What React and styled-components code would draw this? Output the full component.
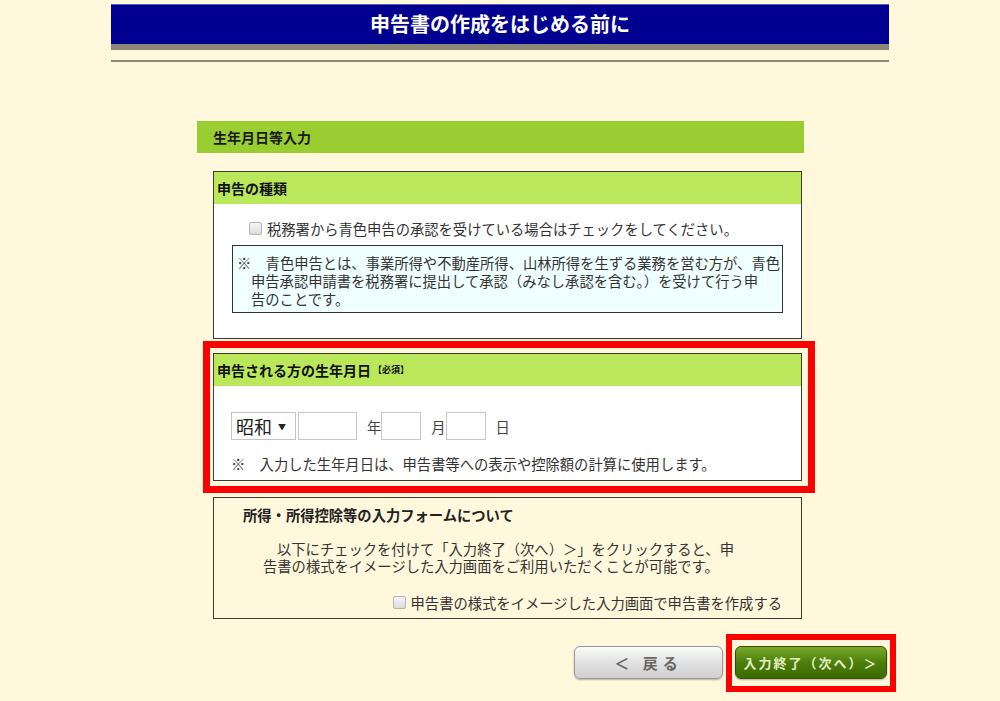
import React from "react";
import styled, { createGlobalStyle } from "styled-components";

const GlobalStyle = createGlobalStyle`
  body {
    margin: 0;
    background: #fff8dc;
    font-family: "Noto Sans CJK JP", "Noto Sans", sans-serif;
    color: #333;
  }
`;

const Page = styled.div`
  width: 778px;
  margin: 0 auto;
  padding-top: 4px;
  padding-bottom: 20px;
`;

const TitleBar = styled.h1`
  margin: 0;
  height: 39px;
  line-height: 37px;
  background: #000090;
  border-top: 1px solid #5a5ab0;
  border-bottom: 6px solid #8c8878;
  color: #fff;
  font-size: 20px;
  font-weight: bold;
  text-align: center;
`;

const Rule = styled.hr`
  margin: 10px 0 0;
  height: 2px;
  border: none;
  background: #8c8878;
`;

const Content = styled.div`
  padding-left: 86px;
  margin-top: 59px;
`;

const SectionBar = styled.h2`
  margin: 0;
  width: 607px;
  height: 32px;
  line-height: 32px;
  box-sizing: border-box;
  padding-left: 16px;
  background: #9acd32;
  color: #1a1a1a;
  font-size: 14px;
  font-weight: bold;
`;

const BoxStack = styled.div`
  margin: 18px 0 0 16px;
  width: 589px;
  display: flex;
  flex-direction: column;
`;

const Box = styled.section`
  position: relative;
  box-sizing: border-box;
  border: 1px solid #3c3c30;
  background: ${(p) => (p.$plain ? "#fff8dc" : "#fff")};
  margin-top: ${(p) => p.$gap || 0}px;
  padding-bottom: ${(p) => p.$pb || 0}px;

  ${(p) =>
    p.$marked &&
    `
    &::after {
      content: "";
      position: absolute;
      top: -13px;
      left: -11px;
      right: -14px;
      bottom: -13px;
      border: 7px solid #f00;
      pointer-events: none;
    }
  `}
`;

const BoxHeader = styled.h3`
  margin: 0;
  height: 32px;
  line-height: 32px;
  padding-left: 3px;
  background: #bbe85a;
  color: #111;
  font-size: 14px;
  font-weight: bold;
  display: flex;
  align-items: center;
`;

const Required = styled.span`
  font-size: 9px;
  font-weight: bold;
  margin-left: 2px;
`;

const CheckRow = styled.label`
  display: flex;
  align-items: center;
  height: 20px;
  font-size: 14.3px;
  color: #333;
  justify-content: ${(p) => (p.$right ? "flex-end" : "flex-start")};
  padding: ${(p) => (p.$right ? "0 19px 0 0" : "0 0 0 35px")};
  margin-top: ${(p) => p.$mt || 0}px;
`;

const Check = styled.input.attrs({ type: "checkbox" })`
  appearance: none;
  width: 13px;
  height: 13px;
  margin: 0 5px 0 0;
  border: 1px solid #b4b4b4;
  border-radius: 2px;
  background: linear-gradient(#f6f6f6, #dcdcdc);
`;

const NoteBox = styled.p`
  margin: 7px 18px 0;
  padding: 8px 2px 4px 18px;
  border: 1px solid #333;
  background: #f0ffff;
  font-size: 14.3px;
  line-height: 18px;
  text-indent: -14px;
  color: #333;
`;

const DateRow = styled.div`
  display: flex;
  align-items: center;
  margin: 26px 0 0 17px;
  height: 28px;
`;

const EraSelect = styled.div`
  box-sizing: border-box;
  width: 65px;
  height: 28px;
  border: 1px solid #c4c4c4;
  background: #fff;
  display: flex;
  align-items: center;
  padding-left: 4px;
  font-size: 18px;
  color: #222;

  span {
    font-size: 8px;
    margin-left: 6px;
  }
`;

const DateInput = styled.input`
  box-sizing: border-box;
  width: ${(p) => p.$w}px;
  height: 28px;
  margin-left: 2px;
  border: 1px solid #c8c8c8;
  background: #fff;
`;

const Unit = styled.span`
  font-size: 14.3px;
  color: #444;
  margin: 0 -2px 0 10px;
`;

const Note = styled.p`
  margin: 15px 0 0 17px;
  font-size: 14.3px;
  line-height: 18px;
  color: #333;
`;

const FormTitle = styled.h3`
  margin: 7px 0 0 29px;
  font-size: 14.3px;
  line-height: 20px;
  font-weight: bold;
  color: #222;
`;

const FormText = styled.p`
  margin: 15px 0 0 49px;
  font-size: 14.3px;
  line-height: 17px;
  text-indent: 14px;
  color: #333;
`;

const ButtonRow = styled.div`
  display: flex;
  justify-content: flex-end;
  gap: 12px;
  margin-top: 27px;
  padding-right: 2px;
`;

const NavButton = styled.button`
  position: relative;
  width: ${(p) => (p.$primary ? 152 : 149)}px;
  height: 33px;
  border-radius: 6px;
  font-family: inherit;
  font-weight: bold;
  cursor: pointer;
  font-size: ${(p) => (p.$primary ? 13 : 15)}px;
  letter-spacing: ${(p) => (p.$primary ? 2 : 5)}px;
  color: ${(p) => (p.$primary ? "#e4efc4" : "#666")};
  border: 1px solid ${(p) => (p.$primary ? "#2f5200" : "#9a9a9a")};
  background: ${(p) =>
    p.$primary
      ? "linear-gradient(#78a82a, #4d7e0c 50%, #3d6a04)"
      : "linear-gradient(#fafafa, #e2e2e2 50%, #cfcfcf)"};
  box-shadow: 0 1px 2px rgba(0, 0, 0, 0.3);

  ${(p) =>
    p.$marked &&
    `
    &::after {
      content: "";
      position: absolute;
      top: -13px;
      left: -10px;
      right: -10px;
      bottom: -14px;
      border: 6px solid #f00;
      pointer-events: none;
    }
  `}
`;

const App = () => {
  return (
    <>
      <GlobalStyle />
      <Page>
        <TitleBar>申告書の作成をはじめる前に</TitleBar>
        <Rule />
        <Content>
          <SectionBar>生年月日等入力</SectionBar>
          <BoxStack>
            <Box $pb={25}>
              <BoxHeader>申告の種類</BoxHeader>
              <CheckRow $mt={14}>
                <Check />
                税務署から青色申告の承認を受けている場合はチェックをしてください。
              </CheckRow>
              <NoteBox>
                ※　青色申告とは、事業所得や不動産所得、山林所得を生ずる業務を営む方が、青色
                <br />
                申告承認申請書を税務署に提出して承認（みなし承認を含む。）を受けて行う申
                <br />
                告のことです。
              </NoteBox>
            </Box>

            <Box $gap={14} $pb={7} $marked>
              <BoxHeader>
                申告される方の生年月日<Required>【必須】</Required>
              </BoxHeader>
              <DateRow>
                <EraSelect>
                  昭和<span>▼</span>
                </EraSelect>
                <DateInput $w={59} />
                <Unit>年</Unit>
                <DateInput $w={40} />
                <Unit>月</Unit>
                <DateInput $w={40} />
                <Unit>日</Unit>
              </DateRow>
              <Note>※　入力した生年月日は、申告書等への表示や控除額の計算に使用します。</Note>
            </Box>

            <Box $gap={16} $pb={6} $plain>
              <FormTitle>所得・所得控除等の入力フォームについて</FormTitle>
              <FormText>
                以下にチェックを付けて「入力終了（次へ）＞」をクリックすると、申
                <br />
                告書の様式をイメージした入力画面をご利用いただくことが可能です。
              </FormText>
              <CheckRow $right $mt={18}>
                <Check />
                申告書の様式をイメージした入力画面で申告書を作成する
              </CheckRow>
            </Box>
          </BoxStack>
        </Content>
        <ButtonRow>
          <NavButton>＜ 戻る</NavButton>
          <NavButton $primary $marked>
            入力終了（次へ）＞
          </NavButton>
        </ButtonRow>
      </Page>
    </>
  );
};

export default App;
